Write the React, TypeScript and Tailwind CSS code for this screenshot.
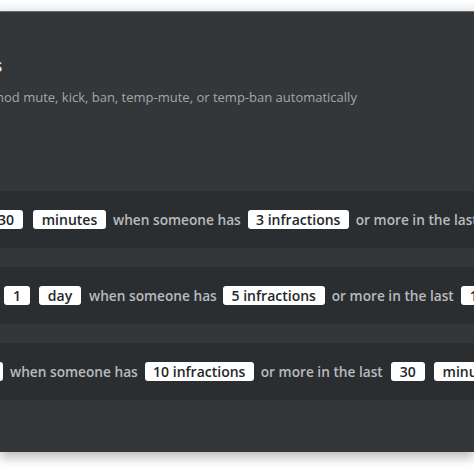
import React from "react";

const Box = ({ children, className = "" }: { children: React.ReactNode; className?: string }) => (
  <div className={`flex h-[19px] shrink-0 items-center justify-center whitespace-nowrap rounded-[3px] bg-white text-[14px] font-semibold leading-none text-[#23272a] ${className}`}>
    {children}
  </div>
);

const Txt = ({ children, className = "" }: { children: React.ReactNode; className?: string }) => (
  <span className={`shrink-0 whitespace-nowrap text-[13.7px] font-semibold leading-none text-[#b8bbbe] ${className}`}>{children}</span>
);

export default function App() {
  return (
    <div className="h-[474px] w-[474px] overflow-hidden bg-white" style={{ fontFamily: '"Open Sans", "Noto Sans", sans-serif' }}>
      <div className="h-[11px] bg-gradient-to-b from-white to-[#eef0f2]" />
      <div className="h-[441px] overflow-hidden border-t border-[#6b6f73] bg-[#33373a] shadow-[0_6px_10px_rgba(0,0,0,0.25)]">
        <div className="h-[42px]" />
        <div className="ml-[-62px] whitespace-nowrap text-[18px] font-semibold leading-[22px] text-[#e6e7e8]">Actions</div>
        <div className="mt-[12px] ml-[-61px] whitespace-nowrap text-[13px] leading-[18px] text-[#a3a6a9]">
          Set a method mute, kick, ban, temp-mute, or temp-ban automatically
        </div>
        <div className="h-[85px]" />
        <div className="flex flex-col gap-[19px]">
          <div className="flex h-[57px] items-center overflow-hidden bg-[#2b2e31]">
            <Box className="ml-[-11px] w-[34px]">30</Box>
            <Box className="ml-[10px] w-[73px]">minutes</Box>
            <Txt className="ml-[7px]">when someone has</Txt>
            <Box className="ml-[7px] w-[101px]">3 infractions</Box>
            <Txt className="ml-[7px]">or more in the last</Txt>
          </div>
          <div className="flex h-[57px] items-center overflow-hidden bg-[#2b2e31]">
            <Box className="ml-[4px] w-[26px]">1</Box>
            <Box className="ml-[9px] w-[42px]">day</Box>
            <Txt className="ml-[8px]">when someone has</Txt>
            <Box className="ml-[6px] w-[102px]">5 infractions</Box>
            <Txt className="ml-[7px]">or more in the last</Txt>
            <Box className="ml-[7px] w-[26px]">1</Box>
          </div>
          <div className="flex h-[57px] items-center overflow-hidden bg-[#2b2e31]">
            <Box className="ml-[-39px] w-[42px]">day</Box>
            <Txt className="ml-[7px]">when someone has</Txt>
            <Box className="ml-[7px] w-[109px]">10 infractions</Box>
            <Txt className="ml-[7px]">or more in the last</Txt>
            <Box className="ml-[8px] w-[34px]">30</Box>
            <Box className="ml-[9px] w-[73px]">minutes</Box>
          </div>
        </div>
      </div>
    </div>
  );
}
